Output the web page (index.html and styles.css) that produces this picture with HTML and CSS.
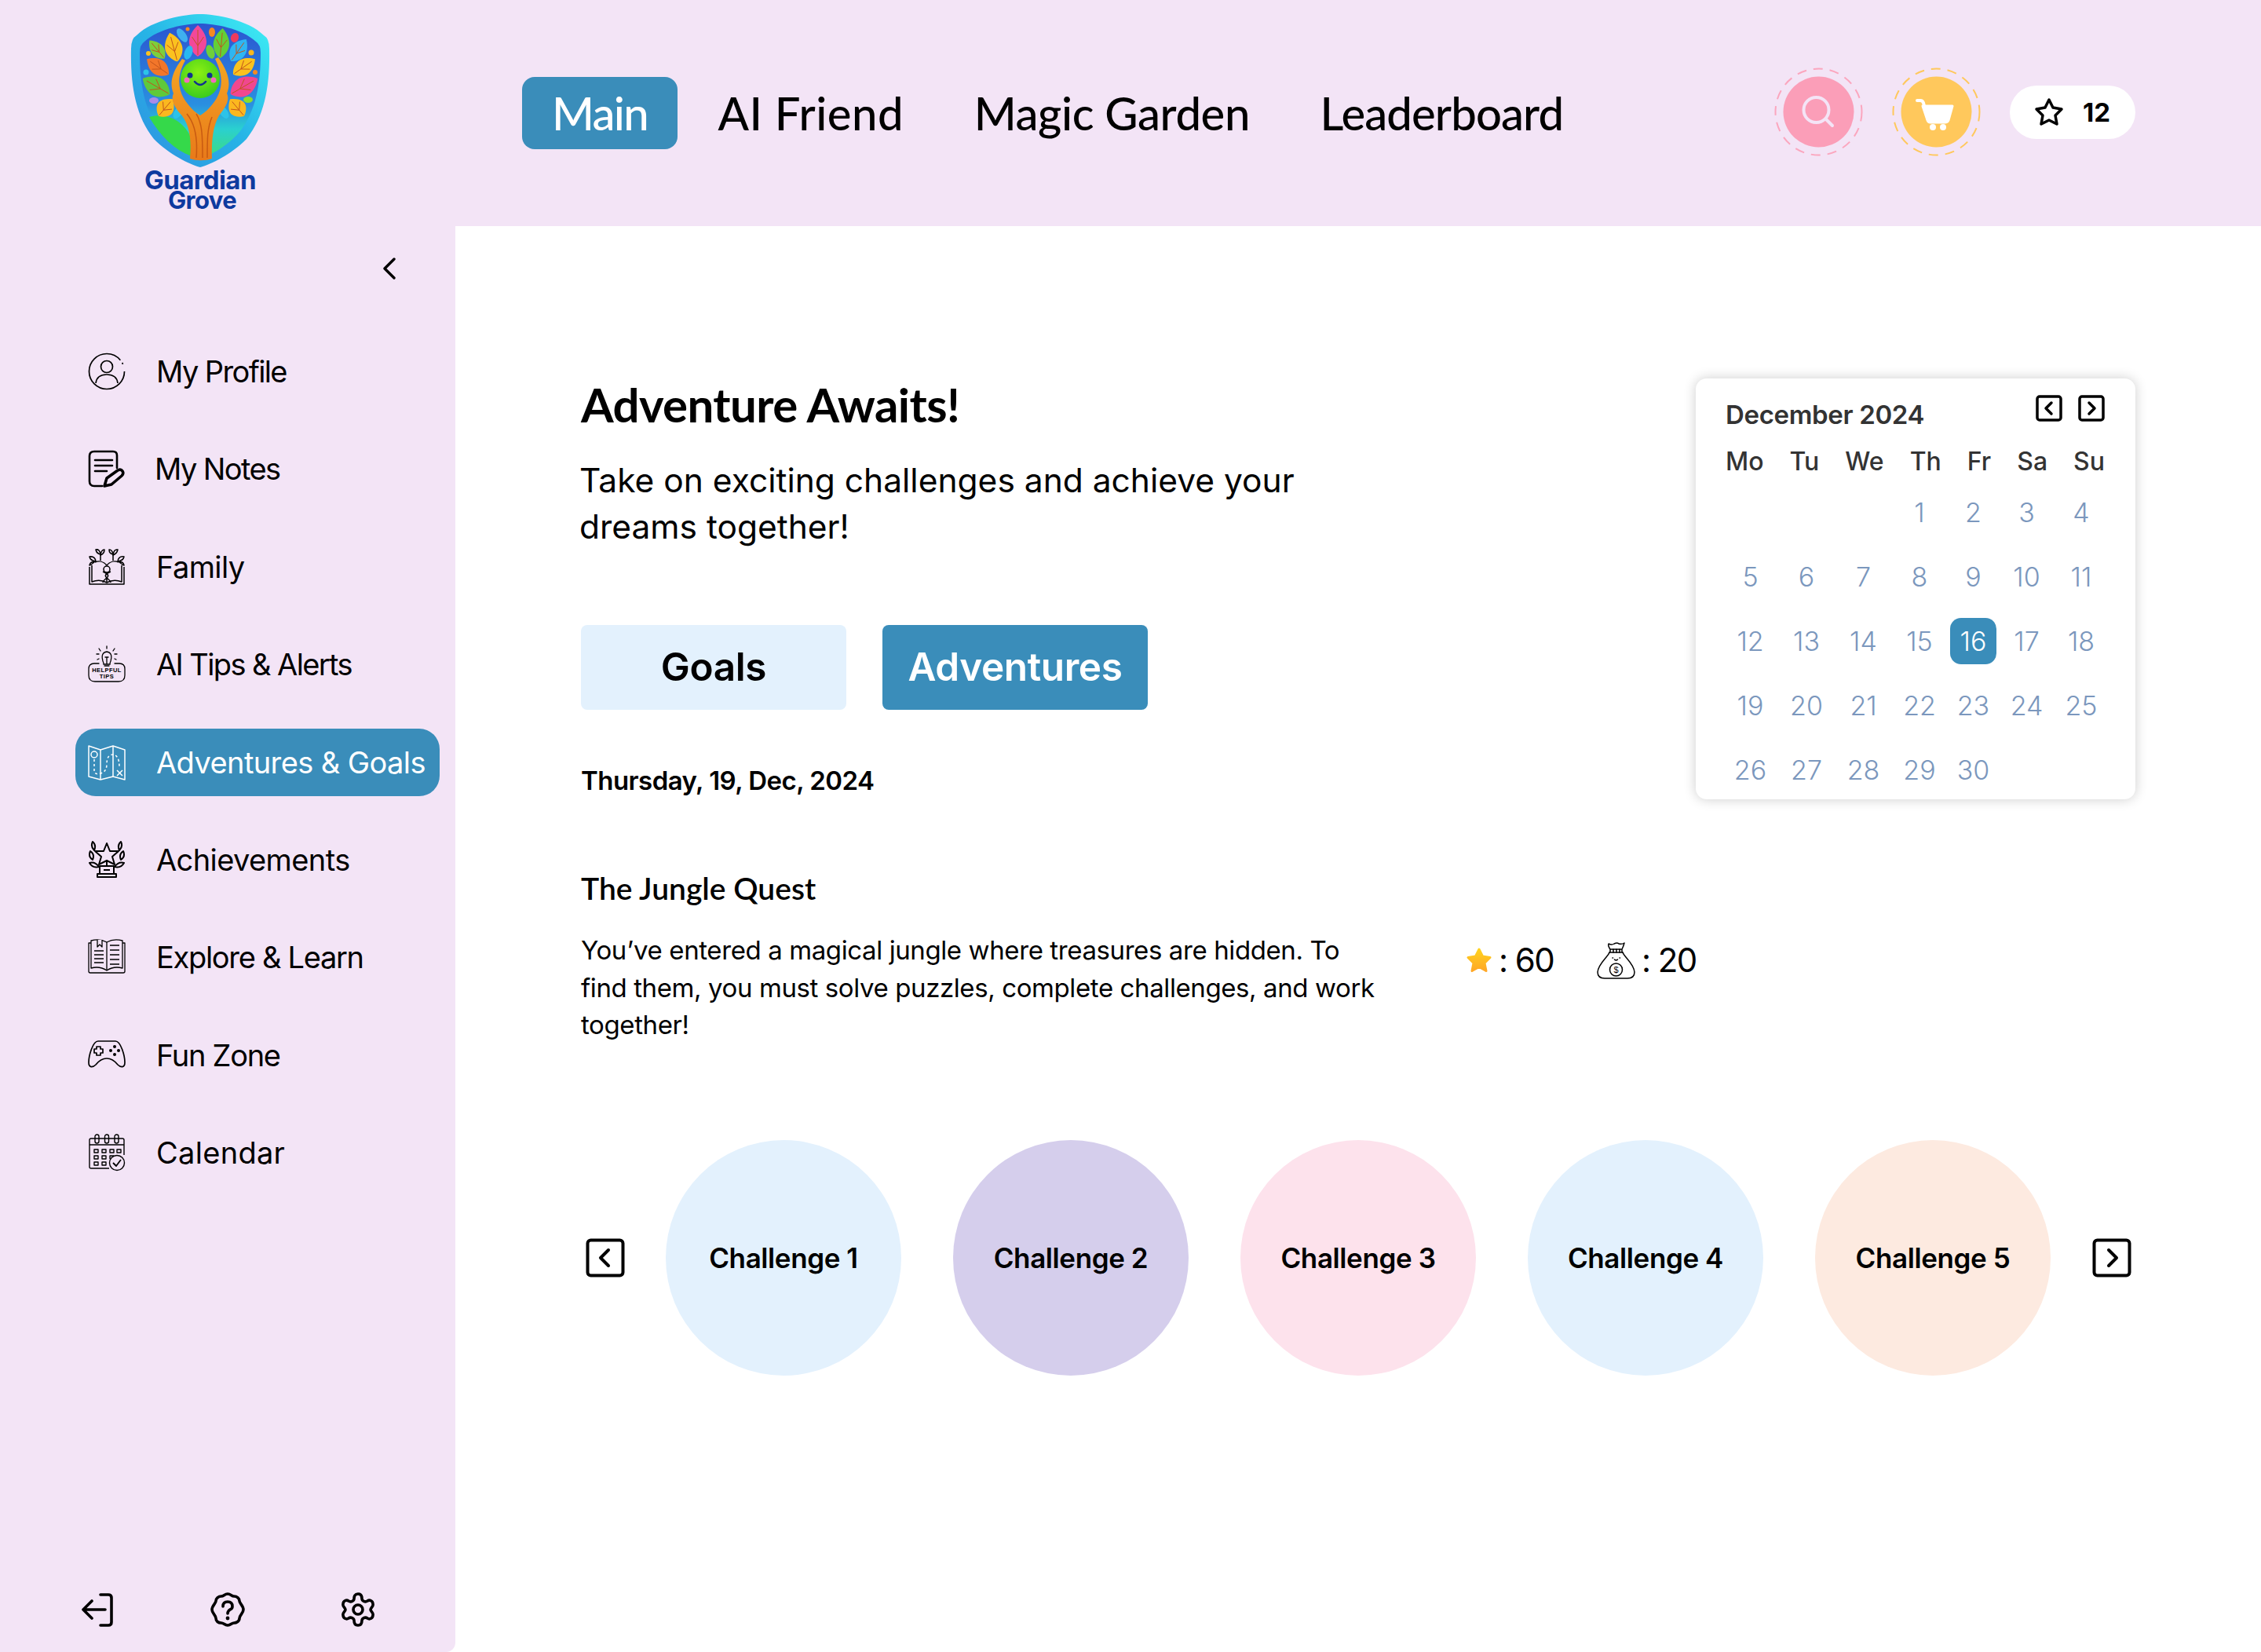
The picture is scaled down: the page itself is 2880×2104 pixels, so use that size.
FILE: index.html
```html
<!DOCTYPE html>
<html lang="en">
<head>
<meta charset="utf-8">
<title>Guardian Grove</title>
<link rel="stylesheet" href="styles.css">
</head>
<body>
<div class="app">
  <header class="topbar">
    <div class="brand">
      <svg class="shield" viewBox="0 0 178 196" aria-hidden="true">
        <defs>
          <linearGradient id="rim" x1="1" y1="0" x2="0" y2="1"><stop offset="0" stop-color="#3ff0f5"/><stop offset=".5" stop-color="#27b4e6"/><stop offset="1" stop-color="#2f8fe0"/></linearGradient>
          <linearGradient id="field" x1="0" y1="0" x2="0" y2="1"><stop offset="0" stop-color="#2b55d0"/><stop offset=".6" stop-color="#2a8fe0"/><stop offset=".78" stop-color="#2ad0d0"/><stop offset="1" stop-color="#3ddc7c"/></linearGradient>
          <linearGradient id="wood" x1="0" y1="0" x2="0" y2="1"><stop offset="0" stop-color="#f5a623"/><stop offset="1" stop-color="#e8791a"/></linearGradient>
          <radialGradient id="face" cx=".45" cy=".35" r=".75"><stop offset="0" stop-color="#8cf012"/><stop offset="1" stop-color="#2fc71f"/></radialGradient>
          <g id="leaf"><path d="M0-1C.75-.6 1-.1.9.2C.8.6.3.9 0 1C-.3.9-.8.6-.9.2C-1-.1-.75-.6 0-1Z"/><path d="M0-.7V.9M0 .3L.62-.25M0 .3L-.62-.25" fill="none" stroke="#c2541c" stroke-width="1" vector-effect="non-scaling-stroke"/></g>
        </defs>
        <path fill="url(#rim)" d="M89 1C70 1 28 8 8 28Q1 32 1 45C0 90 6 130 30 160C50 180 75 192 89 196C103 192 128 180 148 160C172 130 178 90 177 45Q177 32 170 28C150 8 108 1 89 1Z"/>
        <path fill="url(#field)" d="M89 13C72 13 36 19 18 36Q12 40 12 50C12 90 18 124 38 150C55 170 75 180 89 185C103 180 123 170 140 150C160 124 166 90 166 50Q166 40 160 36C142 19 106 13 89 13Z"/>
        <path fill="#35d94a" d="M24 132C46 126 68 136 78 160L78 182C56 174 38 156 24 132Z"/>
        <use href="#leaf" fill="#f2489a" transform="translate(86 35) scale(12 20)"/>
        <use href="#leaf" fill="#fbc21f" transform="translate(55 43) rotate(-15) scale(12 19)"/>
        <use href="#leaf" fill="#63cf38" transform="translate(116 38) rotate(5) scale(11 19)"/>
        <use href="#leaf" fill="#2eb6f2" transform="translate(138 47) rotate(35) scale(11 17)"/>
        <use href="#leaf" fill="#7dcf3c" transform="translate(34 46) rotate(-40) scale(9 15)"/>
        <use href="#leaf" fill="#f2762a" transform="translate(35 68) rotate(-55) scale(11 17)"/>
        <use href="#leaf" fill="#fbc21f" transform="translate(145 68) rotate(55) scale(11 17)"/>
        <use href="#leaf" fill="#5fc93b" transform="translate(33 93) rotate(-60) scale(13 20)"/>
        <use href="#leaf" fill="#f0478f" transform="translate(145 93) rotate(60) scale(13 20)"/>
        <use href="#leaf" fill="#fbb81f" transform="translate(45 120) rotate(40) scale(12 14)"/>
        <use href="#leaf" fill="#fbb81f" transform="translate(136 120) rotate(-40) scale(12 14)"/>
        <ellipse cx="66" cy="28" rx="5" ry="10" fill="#3fb0ef" transform="rotate(-35 66 28)"/>
        <ellipse cx="104" cy="24" rx="4" ry="6" fill="#f58a22"/>
        <ellipse cx="133" cy="31" rx="5" ry="6" fill="#ee3b5c" transform="rotate(20 133 31)"/>
        <ellipse cx="74" cy="50" rx="5" ry="9" fill="#29b8f0" transform="rotate(20 74 50)"/>
        <ellipse cx="102" cy="49" rx="5" ry="9" fill="#6fcf3a" transform="rotate(-20 102 49)"/>
        <ellipse cx="61" cy="126" rx="5" ry="9" fill="#2cc3e8" transform="rotate(35 61 126)"/>
        <ellipse cx="119" cy="126" rx="5" ry="9" fill="#2cc3e8" transform="rotate(-35 119 126)"/>
        <ellipse cx="30" cy="111" rx="6" ry="4" fill="#a98be8"/>
        <ellipse cx="150" cy="110" rx="6" ry="4" fill="#8adf2b"/>
        <circle cx="23" cy="51" r="3" fill="#fbc21f"/><circle cx="154" cy="50" r="3.5" fill="#fbb81f"/><circle cx="20" cy="75" r="3.5" fill="#2cc3e8"/><circle cx="159" cy="75" r="3" fill="#f58a22"/><circle cx="73" cy="20" r="2.5" fill="#f58a22"/>
        <path fill="url(#wood)" d="M76 185C78 160 76 140 62 126C54 116 52 108 55 102C50 90 52 76 66 58L70 60C60 78 60 94 68 108C74 118 82 126 89 130C96 126 104 118 110 108C118 94 118 78 108 58L112 56C126 76 128 90 123 102C126 108 124 116 116 126C106 138 103 160 104 185C95 188 85 188 76 185Z"/>
        <path fill="none" stroke="#c85a12" stroke-width="1.5" d="M84 184C86 160 82 140 72 128M92 184C92 160 92 140 84 128M98 184C98 160 98 146 104 132"/>
        <circle cx="89" cy="83" r="25" fill="url(#face)"/>
        <circle cx="76" cy="79" r="3.5" fill="#12338f"/><circle cx="101" cy="79" r="3.5" fill="#12338f"/>
        <circle cx="72" cy="85" r="3.5" fill="#f36bc0"/><circle cx="106" cy="85" r="3.5" fill="#f36bc0"/>
        <path fill="none" stroke="#12338f" stroke-width="2.5" stroke-linecap="round" d="M82 87Q89 95 96 87"/>
      </svg>
      <div class="brand-name"><span>Guardian</span><span class="brand-second">Grove</span></div>
    </div>
    <nav class="mainnav">
      <a class="navlink navlink-main">Main</a>
      <a class="navlink navlink-ai">AI Friend</a>
      <a class="navlink navlink-garden">Magic Garden</a>
      <a class="navlink">Leaderboard</a>
    </nav>
    <div class="actions">
      <button class="ringbtn" aria-label="Search">
        <svg viewBox="0 0 113 113" class="ringsvg">
          <circle cx="56.500" cy="56.500" r="55" fill="none" stroke="#fba6be" stroke-width="2" stroke-dasharray="12 9"/>
          <circle cx="56.500" cy="56.500" r="45" fill="#fb9eb8"/>
          <circle cx="53.500" cy="54" r="16" fill="none" stroke="#f4e4f6" stroke-width="4"/>
          <path d="M66 66L74 74" stroke="#f4e4f6" stroke-width="4" stroke-linecap="round"/>
        </svg>
      </button>
      <button class="ringbtn" aria-label="Cart">
        <svg viewBox="0 0 113 113" class="ringsvg">
          <circle cx="56.500" cy="56.500" r="55" fill="none" stroke="#ffc85c" stroke-width="2" stroke-dasharray="12 9"/>
          <circle cx="56.500" cy="56.500" r="45" fill="#ffc85c"/>
          <path d="M39 49H77L72 67Q71 70 67 70H49Q46 70 45 67Z" fill="#fff" stroke="#fff" stroke-width="3" stroke-linejoin="round"/>
          <path d="M32 42H36Q39 42 40 45L46 67" fill="none" stroke="#fff" stroke-width="4" stroke-linecap="round"/>
          <circle cx="52" cy="76" r="4" fill="#fff"/><circle cx="65" cy="76" r="4" fill="#fff"/>
        </svg>
      </button>
      <div class="points">
        <svg class="points-star" viewBox="0 0 38 38"><path fill="none" stroke="#000" stroke-width="3.500" stroke-linejoin="round" d="M19 3L24 13L35 15L27 23L29 34L19 29L9 34L11 23L3 15L14 13Z"/></svg>
        <span>12</span>
      </div>
    </div>
  </header>

  <aside class="sidebar">
    <button class="collapse" aria-label="Collapse">
      <svg viewBox="0 0 18 28"><path d="M15 2L3 14L15 26" fill="none" stroke="#000" stroke-width="3.400" stroke-linecap="round" stroke-linejoin="round"/></svg>
    </button>
    <ul class="menu">
      <li class="menuitem fit-a">
        <svg class="mi" viewBox="0 0 48 48"><g fill="none" stroke="#000" stroke-width="1.700"><circle cx="24" cy="24" r="22.500" stroke-dasharray="125 4 2 10"/><circle cx="24" cy="18" r="7.500"/><path d="M10 39C11 31 17 28 24 28C31 28 37 31 38 39"/></g></svg>
        <span>My Profile</span>
      </li>
      <li class="menuitem menuitem-notes fit-a">
        <svg class="mi" viewBox="0 0 48 48"><g fill="none" stroke="#000" stroke-width="2.600" stroke-linecap="round" stroke-linejoin="round"><path d="M37 23V7Q37 2 32 2H8Q2 2 2 8V40Q2 46 8 46H18"/><path d="M9 13H31M9 20H31M9 27H24"/><path d="M21 46L24 36L38 26Q42 24 44 27Q46 30 43 33L30 44Z" fill="#f3e4f6" stroke-width="3.600"/></g></svg>
        <span>My Notes</span>
      </li>
      <li class="menuitem">
        <svg class="mi" viewBox="0 0 48 48"><g fill="none" stroke="#000" stroke-width="1.500" stroke-linejoin="round"><path d="M2 24V46H46V24M5 22V43Q15 39 24 44Q33 39 43 43V22"/><path d="M24 44V38M19 30Q29 34 24 38Q19 42 19 44M29 30Q19 34 24 38Q29 42 29 44"/><circle cx="24" cy="27" r="4"/><path d="M24 22C20 17 14 16 9 18M24 22C28 17 34 16 39 18M16 16V8M32 16V8"/><path d="M16 8Q11 7 10 2Q15 1 16 8ZM16 9Q21 7 21 2Q17 2 16 9ZM10 17Q3 16 2 11Q9 10 10 17ZM8 18Q3 22 2 22Q3 17 8 18ZM32 8Q27 7 27 2Q31 2 32 8ZM32 9Q37 7 38 2Q33 1 32 9ZM38 17Q45 16 46 11Q39 10 38 17ZM40 18Q45 22 46 22Q45 17 40 18Z"/></g></svg>
        <span>Family</span>
      </li>
      <li class="menuitem fit-a">
        <svg class="mi" viewBox="0 0 48 48"><g fill="none" stroke="#000" stroke-width="1.300" stroke-linecap="round"><path d="M14 23H8Q1 23 1 30V38Q1 46 9 46H39Q47 46 47 38V30Q47 23 40 23H34"/><path d="M19 20Q16 9 24 8Q32 9 29 20Q28 22 28 24H20Q20 22 19 20ZM21 26H27M24 24V16M22 15H26"/><path d="M24 1V4M14 4L16 7M34 4L32 7M11 11H14M37 11H34M14 17L12 18M34 17L36 18"/></g><text class="tip-text" x="24" y="33.500">HELPFUL</text><text class="tip-text" x="24" y="42">TIPS</text></svg>
        <span>AI Tips &amp; Alerts</span>
      </li>
      <li class="menuitem is-active">
        <svg class="mi" viewBox="0 0 48 48"><g fill="none" stroke="#fff" stroke-width="1.500" stroke-linejoin="round"><path d="M1 3L16 8L32 3L47 8V46L32 42L16 46L1 42Z"/><path d="M16 8V46M32 3V42"/><circle cx="8" cy="14" r="4"/><path d="M8 20V36Q10 40 16 38Q24 36 24 26Q24 14 32 14Q40 15 40 30" stroke-dasharray="3 3"/><path d="M37 34L44 41M44 34L37 41"/></g></svg>
        <span>Adventures &amp; Goals</span>
      </li>
      <li class="menuitem">
        <svg class="mi" viewBox="0 0 48 48"><g fill="none" stroke="#000" stroke-width="2" stroke-linejoin="round"><path d="M24 3L28 13L39 13L31 20L34 30L24 25L14 30L17 20L9 13L20 13Z"/><path d="M24 26V32M15 32H33V42H15ZM12 46H36V42H12ZM20 37H28"/><path d="M8 12Q11 5 6 1Q3 7 8 12ZM40 12Q37 5 42 1Q45 7 40 12ZM6 24Q9 17 3 13Q0 20 6 24ZM42 24Q39 17 45 13Q48 20 42 24ZM14 33Q9 26 2 28Q6 35 14 33ZM34 33Q39 26 46 28Q42 35 34 33Z"/></g></svg>
        <span>Achievements</span>
      </li>
      <li class="menuitem fit-b">
        <svg class="mi" viewBox="0 0 48 48"><g fill="none" stroke="#000" stroke-width="1.300" stroke-linejoin="round"><path d="M4 6H1V42Q1 44 3 44H45Q47 44 47 42V6H44"/><path d="M4 38V3Q15 0 24 5Q33 0 44 3V38Q33 35 24 41Q15 35 4 38Z"/><path d="M24 5V41"/><path d="M12 2V11L15 8L18 11V2" fill="#f3e4f6"/><path d="M8 16H20M8 21H20M8 26H20M8 31H20M28 9H40M28 15H40M28 21H40M28 27H40M28 33H40"/></g></svg>
        <span>Explore &amp; Learn</span>
      </li>
      <li class="menuitem fit-b">
        <svg class="mi" viewBox="0 0 48 48"><g fill="none" stroke="#000" stroke-width="1.700" stroke-linejoin="round"><path d="M13 6H35C42 6 47 25 47 33C47 40 42 40 38 36C34 31 30 28 24 28C18 28 14 31 10 36C6 40 1 40 1 33C1 25 6 6 13 6Z"/><path d="M11 13H16V16H19V21H16V24H11V21H8V16H11Z"/></g><circle cx="34" cy="13" r="2"/><circle cx="29" cy="18" r="2"/><circle cx="39" cy="18" r="2"/><circle cx="34" cy="23" r="2"/></svg>
        <span>Fun Zone</span>
      </li>
      <li class="menuitem fit-c">
        <svg class="mi" viewBox="0 0 48 48"><g fill="none" stroke="#000" stroke-width="1.400" stroke-linejoin="round"><path d="M27 44H4Q2 44 2 42V8Q2 6 4 6H44Q46 6 46 8V27"/><path d="M2 14H46"/><rect x="9" y="1" width="5" height="11" rx="2.500"/><rect x="21.500" y="1" width="5" height="11" rx="2.500"/><rect x="34" y="1" width="5" height="11" rx="2.500"/><rect x="8" y="20" width="5" height="4"/><rect x="18" y="20" width="5" height="4"/><rect x="28" y="20" width="5" height="4"/><rect x="37" y="20" width="5" height="4"/><rect x="8" y="28" width="5" height="4"/><rect x="18" y="28" width="5" height="4"/><path d="M33 28H28V32"/><rect x="8" y="36" width="5" height="4"/><rect x="18" y="36" width="5" height="4"/><circle cx="37" cy="37" r="9.500" fill="#f3e4f6"/><path d="M32 37L36 41L42 33" stroke-width="1.800"/></g></svg>
        <span>Calendar</span>
      </li>
    </ul>
    <div class="sidefoot">
      <svg class="fi" viewBox="0 0 44 44"><path d="M26 3H36Q40 3 40 7V38Q40 42 36 42H26M32 22H4M4 22L15 11M4 22L15 33" fill="none" stroke="#000" stroke-width="3.600" stroke-linecap="round" stroke-linejoin="round"/></svg>
      <svg class="fi" viewBox="0 0 44 44"><path d="M22 2C26 2 27 5 30 5C34 5 37 8 37 11C37 14 42 17 42 22C42 27 37 29 37 33C37 37 33 39 30 39C27 39 26 42 22 42C18 42 17 39 14 39C10 39 7 37 7 33C7 29 2 27 2 22C2 17 7 14 7 11C7 8 10 5 14 5C17 5 18 2 22 2Z" fill="none" stroke="#000" stroke-width="3.600"/><path d="M16 18Q16 12 22 12Q28 12 28 18Q28 21 25 22Q22 24 22 27" fill="none" stroke="#000" stroke-width="3.600" stroke-linecap="round"/><circle cx="22" cy="33" r="2.400"/></svg>
      <svg class="fi" viewBox="0 0 44 44"><path d="M22 2C26 2 27 5 27 8C27 11 31 13 34 11C37 9 41 11 41 15C42 18 38 20 38 22C38 24 42 26 41 29C41 33 37 35 34 33C31 31 27 33 27 36C27 39 26 42 22 42C18 42 17 39 17 36C17 33 13 31 10 33C7 35 3 33 3 29C2 26 6 24 6 22C6 20 2 18 3 15C3 11 7 9 10 11C13 13 17 11 17 8C17 5 18 2 22 2Z" fill="none" stroke="#000" stroke-width="3.600" stroke-linejoin="round"/><circle cx="22" cy="22" r="6" fill="none" stroke="#000" stroke-width="3.600"/></svg>
    </div>
  </aside>

  <main class="content">
    <section class="intro">
      <div class="intro-text">
        <h1 class="hand title">Adventure Awaits!</h1>
        <p class="lead">Take on exciting challenges and achieve your<br>dreams together!</p>
        <div class="tabs">
          <button class="tab tab-light">Goals</button>
          <button class="tab tab-solid">Adventures</button>
        </div>
        <div class="today">Thursday, 19, Dec, 2024</div>
      </div>
      <div class="cal">
        <div class="cal-head">
          <span class="cal-month">December 2024</span>
          <div class="cal-nav">
            <svg class="cal-arrow" viewBox="0 0 34 34"><rect x="2" y="2" width="30" height="30" rx="3" fill="none" stroke="#000" stroke-width="3.500"/><path d="M20 10L13 17L20 24" fill="none" stroke="#000" stroke-width="3.500" stroke-linecap="round" stroke-linejoin="round"/></svg>
            <svg class="cal-arrow" viewBox="0 0 34 34"><rect x="2" y="2" width="30" height="30" rx="3" fill="none" stroke="#000" stroke-width="3.500"/><path d="M14 10L21 17L14 24" fill="none" stroke="#000" stroke-width="3.500" stroke-linecap="round" stroke-linejoin="round"/></svg>
          </div>
        </div>
        <div class="cal-week"><span>Mo</span><span>Tu</span><span>We</span><span>Th</span><span>Fr</span><span>Sa</span><span>Su</span></div>
        <div class="cal-grid">
          <span></span><span></span><span></span><span>1</span><span>2</span><span>3</span><span>4</span>
          <span>5</span><span>6</span><span>7</span><span>8</span><span>9</span><span>10</span><span>11</span>
          <span>12</span><span>13</span><span>14</span><span>15</span><span class="is-today">16</span><span>17</span><span>18</span>
          <span>19</span><span>20</span><span>21</span><span>22</span><span>23</span><span>24</span><span>25</span>
          <span>26</span><span>27</span><span>28</span><span>29</span><span>30</span><span></span><span></span>
        </div>
      </div>
    </section>

    <section class="quest">
      <h2 class="hand quest-title">The Jungle Quest</h2>
      <div class="quest-row">
        <p class="quest-text">You’ve entered a magical jungle where treasures are hidden. To<br>find them, you must solve puzzles, complete challenges, and work<br>together!</p>
        <div class="rewards">
          <div class="reward">
            <svg class="reward-star" viewBox="0 0 34 34"><defs><linearGradient id="gold" x1="0" y1="0" x2="0" y2="1"><stop offset="0" stop-color="#ffd21f"/><stop offset="1" stop-color="#ffa726"/></linearGradient></defs><path fill="url(#gold)" stroke="url(#gold)" stroke-width="3" stroke-linejoin="round" d="M17 3L21.500 12L31 13.500L24 20.500L26 30.500L17 25.500L8 30.500L10 20.500L3 13.500L12.500 12Z"/></svg>
            <span>: 60</span>
          </div>
          <div class="reward">
            <svg class="reward-icon" viewBox="0 0 49 48"><g fill="none" stroke="#000" stroke-width="1.500" stroke-linecap="round" stroke-linejoin="round"><path d="M16 14C14 20 2 28 1 39C1 45 5 47 10 47H39C44 47 48 45 48 39C47 28 35 20 33 14"/><path d="M16 14H33M17 10H32V14H17ZM17 10C15 7 14 5 15 3Q19 5 22 3Q26 1 28 3Q32 4 35 2Q34 6 32 10"/><path d="M21 10V14M25 10V14M29 10V14"/><path d="M20 21H20.500M29 21H29.500M22.500 23Q24.500 25 26.500 23"/><circle cx="24.500" cy="36" r="8"/></g><text class="bag-dollar" x="24.500" y="40">$</text></svg>
            <span>: 20</span>
          </div>
        </div>
      </div>
    </section>

    <section class="carousel">
      <svg class="car-arrow" viewBox="0 0 50 50"><rect x="2.500" y="2.500" width="45" height="45" rx="4" fill="none" stroke="#000" stroke-width="4"/><path d="M29 15L19 25L29 35" fill="none" stroke="#000" stroke-width="4" stroke-linecap="round" stroke-linejoin="round"/></svg>
      <div class="bubbles">
        <div class="bubble bubble-blue">Challenge 1</div>
        <div class="bubble bubble-purple">Challenge 2</div>
        <div class="bubble bubble-pink">Challenge 3</div>
        <div class="bubble bubble-blue">Challenge 4</div>
        <div class="bubble bubble-peach">Challenge 5</div>
      </div>
      <svg class="car-arrow" viewBox="0 0 50 50"><rect x="2.500" y="2.500" width="45" height="45" rx="4" fill="none" stroke="#000" stroke-width="4"/><path d="M21 15L31 25L21 35" fill="none" stroke="#000" stroke-width="4" stroke-linecap="round" stroke-linejoin="round"/></svg>
    </section>
  </main>
</div>
</body>
</html>
```
FILE: styles.css
```css
* { box-sizing: border-box; }
html, body { margin: 0; padding: 0; background: #fff; }
body { font-family: Inter, "Liberation Sans", sans-serif; color: #000; }
button { border: 0; padding: 0; background: none; font: inherit; color: inherit; }
h1, h2, p, ul { margin: 0; padding: 0; }
ul { list-style: none; }

.app {
  width: 2880px;
  height: 2104px;
  display: grid;
  grid-template-columns: 580px 1fr;
  grid-template-rows: 288px 1fr;
  overflow: hidden;
}

/* top bar */
.topbar {
  grid-column: 1 / 3;
  background: #f3e4f6;
  display: flex;
  align-items: center;
  padding-right: 160px;
}
.brand {
  width: 665px;
  height: 288px;
  padding: 17px 0 0 166px;
  flex: none;
}
.shield { display: block; width: 178px; height: 196px; }
.brand-name {
  width: 178px;
  display: flex;
  flex-direction: column;
  align-items: center;
  font-weight: 700;
  font-size: 33px;
  line-height: 26px;
  letter-spacing: -0.6px;
  color: #0e3a9f;
  margin-top: 3px;
}
.brand-second { margin-left: 5px; font-size: 31px; }

.mainnav { display: flex; align-items: center; gap: 13.500px; }
.navlink {
  font-family: Lato, "Liberation Sans", sans-serif;
  font-weight: 500;
  font-size: 58px;
  line-height: 92px;
  padding: 0 38px;
  letter-spacing: -0.9px;
  white-space: nowrap;
}
.navlink-main { background: #3a8dba; color: #fff; border-radius: 16px; letter-spacing: -1.7px; }
.navlink-ai { letter-spacing: 0.5px; }
.navlink-garden { letter-spacing: -0.4px; }

.actions { margin: 0 0 3px auto; display: flex; align-items: center; gap: 37px; }
.ringbtn { display: block; width: 113px; height: 113px; }
.ringsvg { display: block; width: 113px; height: 113px; }
.points {
  width: 160px;
  height: 68px;
  background: #fff;
  border-radius: 34px;
  display: flex;
  align-items: center;
  padding-left: 31px;
  gap: 24px;
  font-weight: 700;
  font-size: 33px;
}
.points-star { width: 38px; height: 38px; flex: none; }

/* sidebar */
.sidebar {
  background: #f3e4f6;
  border-bottom-right-radius: 12px;
  display: flex;
  flex-direction: column;
}
.collapse { display: block; width: 18px; height: 28px; margin: 40px 0 0 487px; }
.collapse svg { display: block; width: 18px; height: 28px; }
.menu { margin: 74px 20px 0 96px; display: flex; flex-direction: column; gap: 38.400px; }
.menuitem {
  height: 86px;
  border-radius: 26px;
  padding-left: 16px;
  display: flex;
  align-items: center;
  gap: 39px;
  font-size: 38px;
  letter-spacing: -0.6px;
  white-space: nowrap;
}
.fit-a { letter-spacing: -1.6px; }
.fit-b { letter-spacing: -1.3px; }
.fit-c { letter-spacing: 0.3px; }
.menuitem-notes { gap: 37px; }
.mi { width: 48px; height: 48px; flex: none; }
.tip-text { font-family: "Liberation Sans", sans-serif; font-size: 7.500px; font-weight: 700; letter-spacing: .4px; text-anchor: middle; }
.is-active { background: #3a8dba; color: #fff; }
.sidefoot {
  margin-top: auto;
  padding: 0 0 32px 102px;
  display: flex;
  gap: 122px;
  align-items: center;
}
.fi { width: 44px; height: 44px; flex: none; }

/* content */
.content { padding: 194px 160px 0 160px; }
.hand { font-family: Lato, "Liberation Sans", sans-serif; }
.intro { display: flex; justify-content: space-between; align-items: flex-start; }
.title { font-size: 60px; font-weight: 700; line-height: 66px; letter-spacing: -0.6px; }
.lead { font-size: 42.500px; line-height: 59px; margin-top: 34px; margin-left: -2px; }
.tabs { display: flex; gap: 46px; margin-top: 96px; }
.tab {
  width: 338px;
  height: 108px;
  border-radius: 8px;
  font-size: 49.500px;
  font-weight: 600;
  text-align: center;
  letter-spacing: -0.4px;
  padding-bottom: 3px;
}
.tab-light { background: #e3f1fd; }
.tab-solid { background: #3a8dba; color: #fff; }
.today { font-size: 33px; font-weight: 600; line-height: 50px; margin-top: 65px; letter-spacing: -0.55px; }

/* calendar */
.cal {
  width: 560px;
  height: 536px;
  background: #fff;
  border-radius: 14px;
  box-shadow: 0 0 16px rgba(0, 0, 0, .2);
  padding: 21px 39px 0 38px;
  color: #333;
}
.cal-head { display: flex; justify-content: space-between; height: 50px; }
.cal-month { font-size: 33px; font-weight: 600; line-height: 50px; letter-spacing: -0.35px; }
.cal-nav { display: flex; gap: 20px; }
.cal-arrow { width: 34px; height: 34px; }
.cal-week {
  display: flex;
  justify-content: space-between;
  font-size: 32px;
  font-weight: 500;
  line-height: 40px;
  margin-top: 15px;
}
.cal-grid {
  display: grid;
  grid-template-columns: 71px 72px 73px 70px 67px 69px 70px;
  grid-auto-rows: 81.800px;
  margin: 4px 0 0 -4px;
  font-size: 34px;
  font-weight: 300;
  color: #7b97bd;
  justify-items: center;
  align-items: center;
}
.cal-grid span { display: block; line-height: 59px; height: 59px; width: 59px; text-align: center; border-radius: 14px; }
.cal-grid .is-today { background: #3a8dba; color: #fff; }

/* quest */
.quest { margin-top: 87px; }
.quest-title { font-size: 39px; font-weight: 600; line-height: 50px; }
.quest-row { display: flex; margin-top: 31px; }
.quest-text { width: 1127px; flex: none; font-size: 33px; line-height: 47.700px; letter-spacing: -0.4px; }
.rewards { display: flex; gap: 55px; align-items: center; height: 71px; }
.reward { display: flex; align-items: center; gap: 8px; font-size: 42px; line-height: 48px; letter-spacing: -1.6px; white-space: nowrap; }
.reward-star { width: 34px; height: 34px; flex: none; }
.reward-icon { width: 49px; height: 48px; flex: none; }
.bag-dollar { font-family: "Liberation Sans", sans-serif; font-size: 11px; letter-spacing: 0; text-anchor: middle; }

/* carousel */
.carousel { display: flex; align-items: center; margin-top: 122px; padding-left: 6px; }
.car-arrow { width: 50px; height: 50px; flex: none; }
.bubbles { display: flex; gap: 66px; margin: 0 53px 0 52px; }
.bubble {
  width: 300px;
  height: 300px;
  border-radius: 50%;
  display: flex;
  align-items: center;
  justify-content: center;
  font-size: 35px;
  font-weight: 600;
  letter-spacing: -0.4px;
}
.bubble-blue { background: #e3f1fd; }
.bubble-purple { background: #d5ceec; }
.bubble-pink { background: #fde2ec; }
.bubble-peach { background: #fdeae0; }
```
